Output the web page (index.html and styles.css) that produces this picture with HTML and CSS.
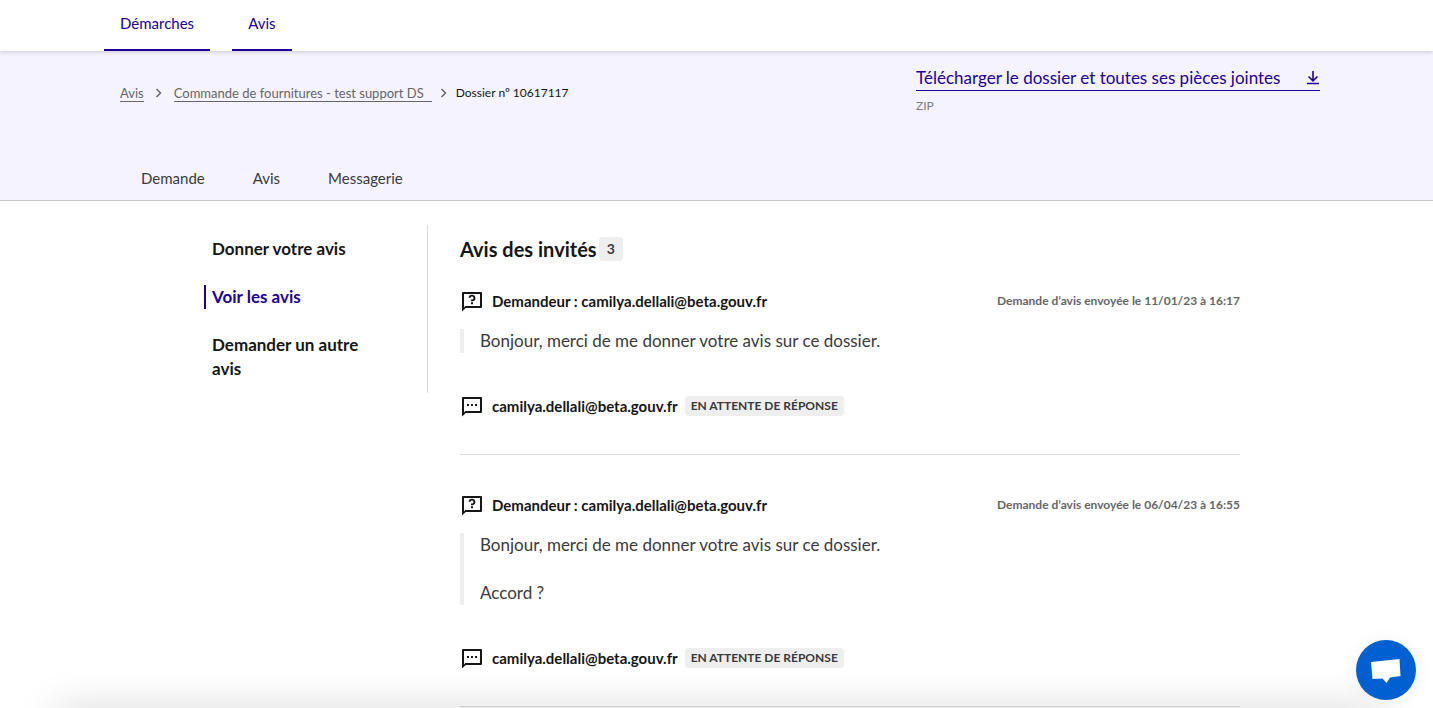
FILE: index.html
```
<!DOCTYPE html>
<html lang="fr">
<head>
<meta charset="utf-8">
<meta name="viewport" content="width=device-width, initial-scale=1">
<title>Avis · Dossier nº 10617117</title>
<link rel="stylesheet" href="styles.css">
</head>
<body>
<svg class="sprite" aria-hidden="true">
  <symbol id="question" viewBox="0 0 24 24"><path d="M5.8 19 2 22.500V4a1 1 0 0 1 1-1h18a1 1 0 0 1 1 1v14a1 1 0 0 1-1 1H5.800zM4 18.400 5.300 17H20V5H4v13.400zM11 13.200h2v2h-2zM8.600 8.800A3.400 3.400 0 1 1 13 12.300h-2v-1.700h1a1.500 1.500 0 1 0-1.500-1.800z" fill-rule="evenodd"/></symbol>
  <symbol id="dots" viewBox="0 0 24 24"><path d="M5.800 19 2 22.500V4a1 1 0 0 1 1-1h18a1 1 0 0 1 1 1v14a1 1 0 0 1-1 1H5.800zM4 18.400 5.300 17H20V5H4v13.400zM7 10h2v2H7zm4 0h2v2h-2zm4 0h2v2h-2z" fill-rule="evenodd"/></symbol>
  <symbol id="chevron" viewBox="0 0 16 16"><path d="m5.500 4 4 4-4 4" fill="none" stroke="currentColor" stroke-width="1.500"/></symbol>
</svg>

<header class="topbar">
  <nav class="topnav" aria-label="Menu principal">
    <a class="topnav-link" href="#demarches">Démarches</a>
    <a class="topnav-link" href="#avis">Avis</a>
  </nav>
</header>

<section class="dossier-head">
  <div class="dossier-row">
    <nav class="breadcrumb" aria-label="Fil d’Ariane">
      <a href="#avis">Avis</a>
      <svg class="chevron chevron-wide"><use href="#chevron"/></svg>
      <a class="procedure" href="#commande">Commande de fournitures - test support DS</a>
      <svg class="chevron"><use href="#chevron"/></svg>
      <span class="current">Dossier nº 10617117</span>
    </nav>
    <div class="download">
      <a class="download-link" href="#zip"><span>Télécharger le dossier et toutes ses pièces jointes</span>
        <svg class="download-icon" viewBox="0 0 14 14" aria-hidden="true"><path d="M1 12.500h12M7 0v9.500M2.500 5.500 7 9.800l4.500-4.300" fill="none" stroke="currentColor" stroke-width="1.600"/></svg>
      </a>
      <p class="download-type">ZIP</p>
    </div>
  </div>
  <nav class="tabs" aria-label="Dossier">
    <a href="#demande">Demande</a>
    <a href="#avis">Avis</a>
    <a href="#messagerie">Messagerie</a>
  </nav>
</section>

<main class="layout">
  <nav class="sidemenu" aria-label="Avis">
    <a href="#donner">Donner votre avis</a>
    <a class="active" href="#voir" aria-current="page">Voir les avis</a>
    <a href="#demander">Demander un autre avis</a>
  </nav>
  <div class="content">
    <h1 class="title">Avis des invités <span class="count">3</span></h1>

    <article class="avis">
      <div class="line">
        <svg class="icon" aria-hidden="true"><use href="#question"/></svg>
        <h2 class="name">Demandeur : camilya.dellali@beta.gouv.fr</h2>
        <span class="date">Demande d’avis envoyée le 11/01/23 à 16:17</span>
      </div>
      <blockquote class="quote"><p>Bonjour, merci de me donner votre avis sur ce dossier.</p></blockquote>
      <div class="line">
        <svg class="icon" aria-hidden="true"><use href="#dots"/></svg>
        <h2 class="name">camilya.dellali@beta.gouv.fr</h2>
        <span class="badge">En attente de réponse</span>
      </div>
    </article>

    <article class="avis">
      <div class="line">
        <svg class="icon" aria-hidden="true"><use href="#question"/></svg>
        <h2 class="name">Demandeur : camilya.dellali@beta.gouv.fr</h2>
        <span class="date">Demande d’avis envoyée le 06/04/23 à 16:55</span>
      </div>
      <blockquote class="quote"><p>Bonjour, merci de me donner votre avis sur ce dossier.</p><p>Accord ?</p></blockquote>
      <div class="line">
        <svg class="icon" aria-hidden="true"><use href="#dots"/></svg>
        <h2 class="name">camilya.dellali@beta.gouv.fr</h2>
        <span class="badge">En attente de réponse</span>
      </div>
    </article>
  </div>
</main>

<div class="bottom-shade"></div>
<button class="chat" type="button" aria-label="Ouvrir la messagerie instantanée">
  <svg viewBox="0 0 60 60" aria-hidden="true"><path d="M15 22 43.500 19 44.500 36 34 37.500 30.500 43 26.500 38.500 16.500 39z" fill="#fff"/></svg>
</button>
</body>
</html>
```
FILE: styles.css
```
* { box-sizing: border-box; }
body {
  margin: 0;
  background: #fff;
  color: #161616;
  font-family: Lato, "Open Sans", sans-serif;
  font-size: 17px;
  line-height: 24px;
}
h1, h2, p, blockquote { margin: 0; }
a { color: inherit; text-decoration: none; }
html { scrollbar-width: none; }
.sprite { display: none; }

.topbar {
  position: relative;
  padding: 0 104px;
  box-shadow: 0 1px 4px rgba(0, 0, 18, 0.18);
}
.topnav { display: flex; gap: 22px; }
.topnav-link {
  padding: 11px 16px 14px;
  border-bottom: 2px solid #210099;
  color: #210099;
  font-size: 15px;
}

.dossier-head {
  padding: 15px 113px 0 120px;
  background: #f5f3ff;
  border-bottom: 1px solid #c6c6c6;
}
.dossier-row {
  display: flex;
  justify-content: space-between;
  min-height: 90px;
}
.breadcrumb {
  display: flex;
  align-items: center;
  gap: 4px;
  height: 54px;
  color: #666;
  font-size: 13px;
  line-height: 16px;
}
.breadcrumb a { border-bottom: 1px solid #666; }
.breadcrumb .procedure { padding-right: 8px; }
.breadcrumb .current { color: #161616; font-size: 12px; }
.chevron { width: 16px; height: 16px; }
.chevron-wide { margin: 0 3px; }
.download { flex: 0 0 404px; }
.download-link {
  display: flex;
  align-items: center;
  justify-content: space-between;
  border-bottom: 1px solid #210099;
  color: #210099;
}
.download-icon { width: 14px; height: 14px; }
.download-type {
  margin-top: 3px;
  color: #7b7b7b;
  font-size: 12px;
}
.tabs {
  display: flex;
  gap: 48px;
  padding: 10px 21px;
  color: #3a3a3a;
  font-size: 15px;
}

.layout {
  display: flex;
  align-items: flex-start;
  padding: 24px 193px 0 204px;
}
.sidemenu {
  display: flex;
  flex: 0 0 224px;
  flex-direction: column;
  padding-right: 32px;
  border-right: 1px solid #ddd;
  font-weight: 700;
}
.sidemenu a { margin: 12px 0; padding: 0 8px; }
.sidemenu .active {
  padding-left: 6px;
  border-left: 2px solid #210099;
  color: #210099;
}
.content { flex: 1; padding-left: 32px; }
.title {
  display: flex;
  align-items: center;
  gap: 2px;
  padding: 12px 0 26px;
  font-size: 20px;
  line-height: 24px;
}
.count {
  padding: 0 8px;
  border-radius: 4px;
  background: #eee;
  color: #3a3a3a;
  font-size: 14px;
}
.avis {
  margin-bottom: 36px;
  padding-bottom: 34px;
  border-bottom: 1px solid #ddd;
}
.avis:last-child { margin-bottom: 0; }
.line { display: flex; align-items: center; min-height: 28px; }
.icon { width: 24px; height: 24px; margin-right: 8px; fill: #161616; }
.name { font-size: 15px; line-height: 24px; }
.date {
  margin-left: auto;
  color: #666;
  font-size: 12px;
  font-weight: 700;
}
.quote {
  margin: 14px 0 39px;
  padding-left: 16px;
  border-left: 4px solid #eee;
  color: #3a3a3a;
}
.quote p + p { margin-top: 24px; }
.badge {
  margin-left: 7px;
  padding: 0 6px;
  border-radius: 4px;
  background: #eee;
  color: #3a3a3a;
  font-size: 12px;
  font-weight: 700;
  line-height: 20px;
  text-transform: uppercase;
}

.bottom-shade {
  position: fixed;
  right: 56px;
  bottom: -40px;
  left: 56px;
  height: 40px;
  box-shadow: 0 0 40px rgba(0, 0, 0, 0.15);
}
.chat {
  position: fixed;
  right: 17px;
  bottom: 8px;
  width: 60px;
  height: 60px;
  padding: 0;
  border: 0;
  border-radius: 50%;
  background: #0060d1;
  box-shadow: 0 2px 20px rgba(0, 0, 0, 0.06);
}
.chat svg { display: block; }
```
